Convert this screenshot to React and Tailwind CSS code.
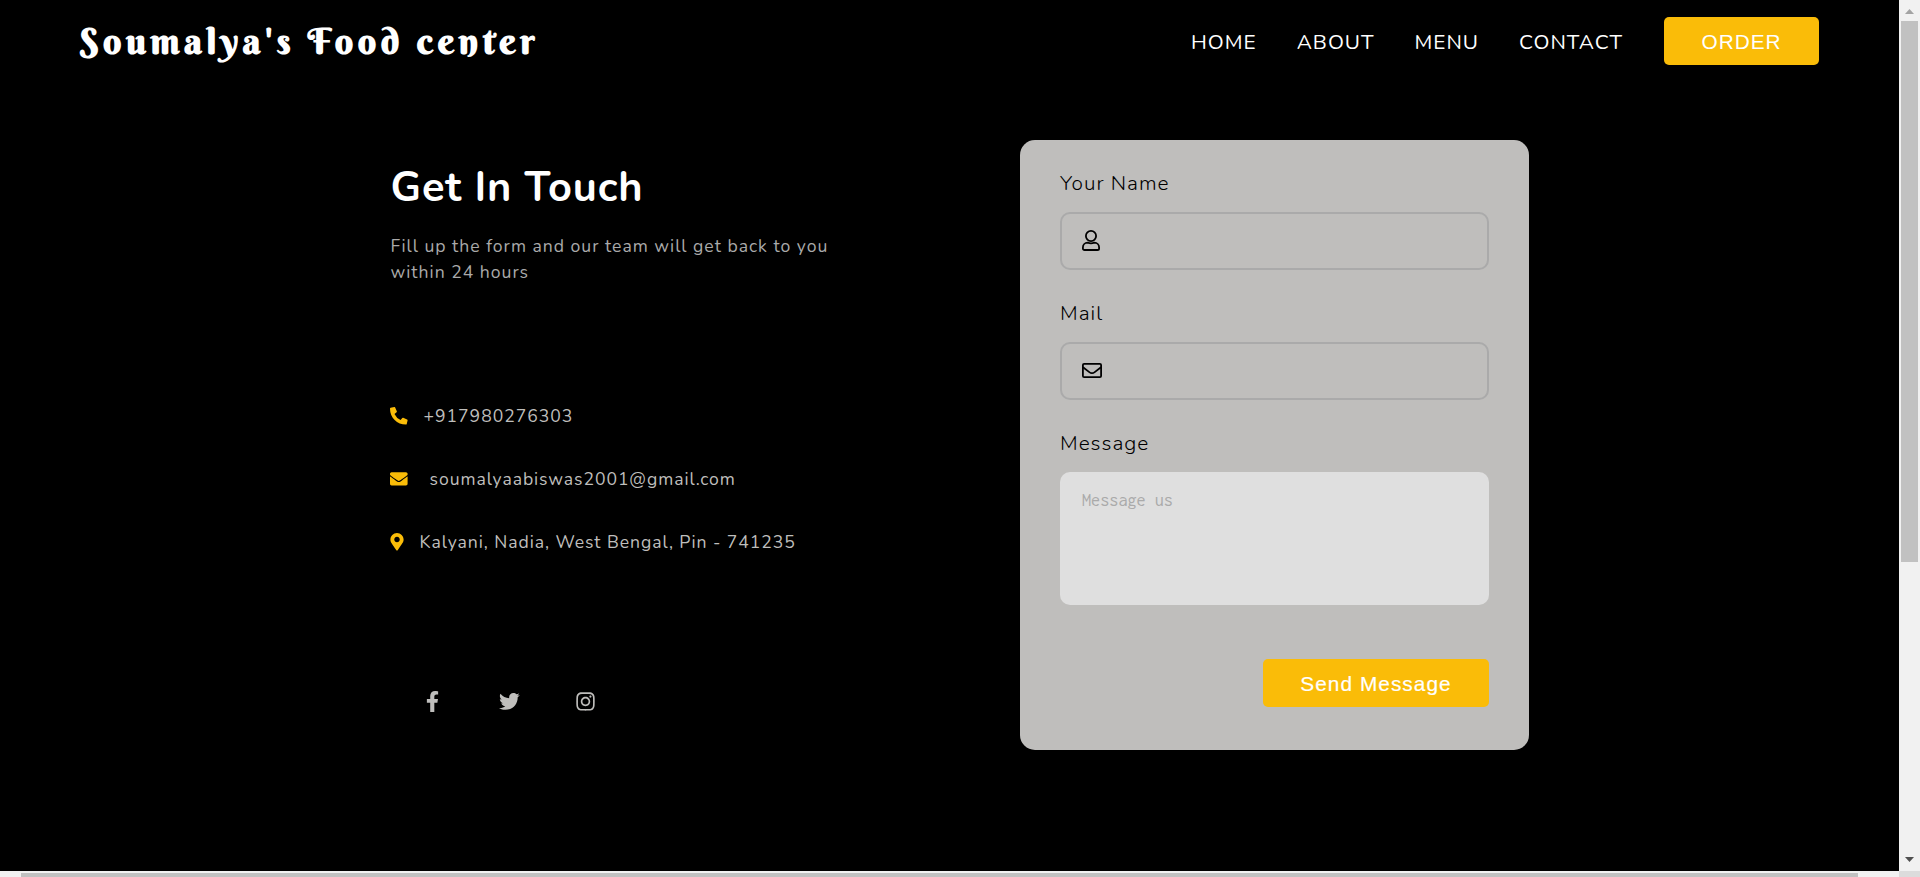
import {
  FaEnvelope,
  FaFacebookF,
  FaInstagram,
  FaMapMarkerAlt,
  FaPhoneAlt,
  FaTwitter,
} from "react-icons/fa";

const navLinks = ["HOME", "ABOUT", "MENU", "CONTACT"];

function UserOutline() {
  return (
    <svg className="-mt-[1px]" width="18" height="21" viewBox="0 0 18 21" fill="none" stroke="black" strokeWidth="1.8">
      <circle cx="9" cy="6" r="5.100" />
      <path d="M5.600 12.700c1.300.5 2.200.7 3.400.7s2.100-.2 3.400-.7c2.700 0 4.700 2.100 4.700 4.800v.9c0 .9-.7 1.600-1.600 1.600h-13c-.9 0-1.600-.7-1.600-1.600v-.9c0-2.700 2-4.800 4.700-4.800z" />
    </svg>
  );
}

function MailOutline() {
  return (
    <svg className="-mt-[1px]" width="20" height="15" viewBox="0 0 20 15" fill="none" stroke="black" strokeWidth="1.8">
      <rect x=".9" y=".9" width="18.200" height="13.200" rx="1.200" />
      <path d="M1 4.200l6.300 4.900c1.900 1.500 3.500 1.500 5.400 0L19 4.200" />
    </svg>
  );
}

function Header() {
  return (
    <header className="flex h-[82px] pl-[80px] text-white">
      <div className="w-[1111px] shrink-0 pt-[16px] font-['Berkshire_Swash','Liberation_Serif',serif] text-[36px] leading-[50px] font-bold tracking-[4.54px] whitespace-pre">
        Soumalya's Food center
      </div>
      <nav className="flex gap-[40px] pt-[17px] text-[20.8px] leading-[50px] tracking-[1px]">
        {navLinks.map((label) => (
          <a key={label}>{label}</a>
        ))}
        <button className="ml-px h-[48px] w-[155px] rounded-[5px] bg-[#fabc08] font-['Liberation_Sans',sans-serif]">
          ORDER
        </button>
      </nav>
    </header>
  );
}

function ContactInfo() {
  return (
    <section className="w-[630px] pt-[22px] pl-[0.5px] text-[17.6px] tracking-[0.95px] text-[#bfbebc]">
      <h1 className="text-[41.600px] leading-[52px] font-bold tracking-[0.9px] text-white">Get In Touch</h1>
      <p className="mt-[19px] leading-[26px] tracking-[0.99px] text-[#aaaaaa]">
        Fill up the form and our team will get back to you
        <br />
        within 24 hours
      </p>
      <div className="mt-[118px] leading-[26px]">
        <div className="flex h-[63px] items-start">
          <FaPhoneAlt className="mt-[4px] -ml-[0.5px] mr-[16px] size-[17.6px] text-[#fabc08]" />
          <span>+917980276303</span>
        </div>
        <div className="flex h-[63px] items-start">
          <FaEnvelope className="mt-[4px] -ml-[0.5px] mr-[22px] size-[17.6px] text-[#fabc08]" />
          <span className="tracking-[0.92px]">soumalyaabiswas2001@gmail.com</span>
        </div>
        <div className="flex h-[63px] items-start">
          <FaMapMarkerAlt className="mt-[4px] -ml-[0.5px] mr-[15.5px] h-[17.6px] w-[14px] text-[#fabc08]" />
          <span>Kalyani, Nadia, West Bengal, Pin - 741235</span>
        </div>
      </div>
      <div className="mt-[99px] flex items-center pl-[31.5px]">
        <FaFacebookF className="mr-[56px] size-[21px]" />
        <FaTwitter className="mr-[55px] size-[20.8px]" />
        <FaInstagram className="size-[21px]" />
      </div>
    </section>
  );
}

function Field({ label, icon }) {
  return (
    <div className="h-[130px]">
      <label className="block text-[20.8px] leading-[28px] font-light tracking-[1px]">{label}</label>
      <div className="mt-[15px] flex h-[58px] items-center rounded-[10px] border-2 border-[#aaaaaa] pl-[20px]">
        {icon}
      </div>
    </div>
  );
}

function ContactForm() {
  return (
    <form className="h-[610px] w-[509px] rounded-[15px] bg-[#bfbebc] px-[40px] pt-[29px] text-black">
      <Field label="Your Name" icon={<UserOutline />} />
      <Field label="Mail" icon={<MailOutline />} />
      <label className="block text-[20.8px] leading-[28px] font-light tracking-[1px]">Message</label>
      <textarea
        placeholder="Message us"
        className="mt-[15px] block h-[133px] w-full resize-none rounded-[10px] bg-[#dfdfdf] px-[22px] pt-[16px] font-['Inconsolata','DejaVu_Sans_Mono',monospace] text-[18.200px] leading-[24px] placeholder:text-[#aaaaaa]"
      />
      <div className="mt-[54px] flex justify-end">
        <button
          type="button"
          className="h-[48px] w-[226px] rounded-[5px] bg-[#fabc08] pt-[2px] font-['Liberation_Sans',sans-serif] text-[20.8px] tracking-[1.05px] text-white [-webkit-text-stroke:0.2px_white]"
        >
          Send Message
        </button>
      </div>
    </form>
  );
}

function VerticalScrollbar() {
  return (
    <div className="flex w-[21px] flex-col items-center bg-[#f1f1f1]">
      <svg className="mt-[9px]" width="9" height="5" viewBox="0 0 9 5">
        <path d="M4.500 0L9 5H0z" fill="#a3a3a3" />
      </svg>
      <div className="mt-[7px] h-[541px] w-[17px] bg-[#c1c1c1]" />
      <svg className="mt-auto mb-[9px]" width="9" height="5" viewBox="0 0 9 5">
        <path d="M4.500 5L0 0h9z" fill="#505050" />
      </svg>
    </div>
  );
}

export default function App() {
  return (
    <div className="flex h-[877px] w-[1920px] flex-col overflow-hidden bg-black font-['Nunito','Lato',sans-serif]">
      <div className="flex h-[871px] shrink-0">
        <div className="flex-1">
          <Header />
          <main className="flex pt-[58px] pl-[390px]">
            <ContactInfo />
            <ContactForm />
          </main>
        </div>
        <VerticalScrollbar />
      </div>
      <div className="flex h-[6px] shrink-0 bg-[#f1f1f1]">
        <div className="mt-[2px] ml-[21px] h-[4px] w-[1837px] bg-[#c1c1c1]" />
        <div className="ml-auto w-[21px] bg-[#dcdcdc]" />
      </div>
    </div>
  );
}
